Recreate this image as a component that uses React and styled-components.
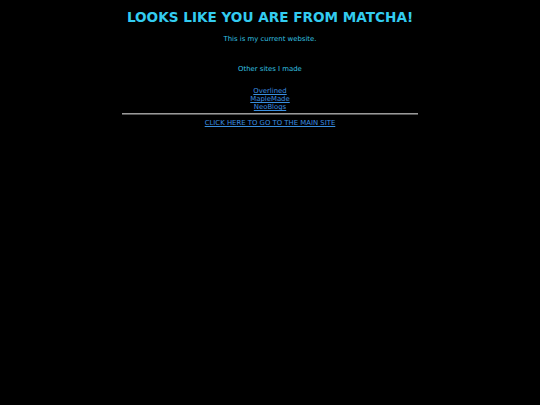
import React from 'react';
import styled, { createGlobalStyle } from 'styled-components';

const Global = createGlobalStyle`
  html, body {
    margin: 0;
    padding: 0;
    background: #000;
  }
  body {
    font-family: "DejaVu Sans", Verdana, sans-serif;
  }
`;

const Page = styled.div`
  width: 296px;
  margin: 0 auto;
  padding-top: 9px;
  text-align: center;
`;

const Title = styled.h1`
  margin: 0;
  font-size: 13.6px;
  line-height: 17px;
  font-weight: bold;
  color: #33ccf0;
`;

const Text = styled.p`
  margin: ${({ $top }) => $top || 0}px 0 0;
  font-size: 6.9px;
  line-height: 10px;
  color: #33c0e0;
`;

const LinkList = styled.div`
  margin-top: 13px;
  display: flex;
  flex-direction: column;
  align-items: center;
`;

const SiteLink = styled.a`
  font-size: 6.9px;
  line-height: 8px;
  color: #3a8fe0;
  text-decoration: underline;
`;

const Rule = styled.hr`
  margin: 2px 0 3px;
  border: 0;
  border-top: 1px solid #999;
  border-bottom: 1px solid #555;
  height: 0;
`;

const MainLink = styled(SiteLink)`
  display: block;
  line-height: 10px;
`;

export default function App() {
  return (
    <>
      <Global />
      <Page>
        <Title>LOOKS LIKE YOU ARE FROM MATCHA!</Title>
        <Text $top={8}>This is my current website.</Text>
        <Text $top={20}>Other sites I made</Text>
        <LinkList>
          <SiteLink href="#">Overlined</SiteLink>
          <SiteLink href="#">MapleMade</SiteLink>
          <SiteLink href="#">NeoBlogs</SiteLink>
        </LinkList>
        <Rule />
        <MainLink href="#">CLICK HERE TO GO TO THE MAIN SITE</MainLink>
      </Page>
    </>
  );
}
